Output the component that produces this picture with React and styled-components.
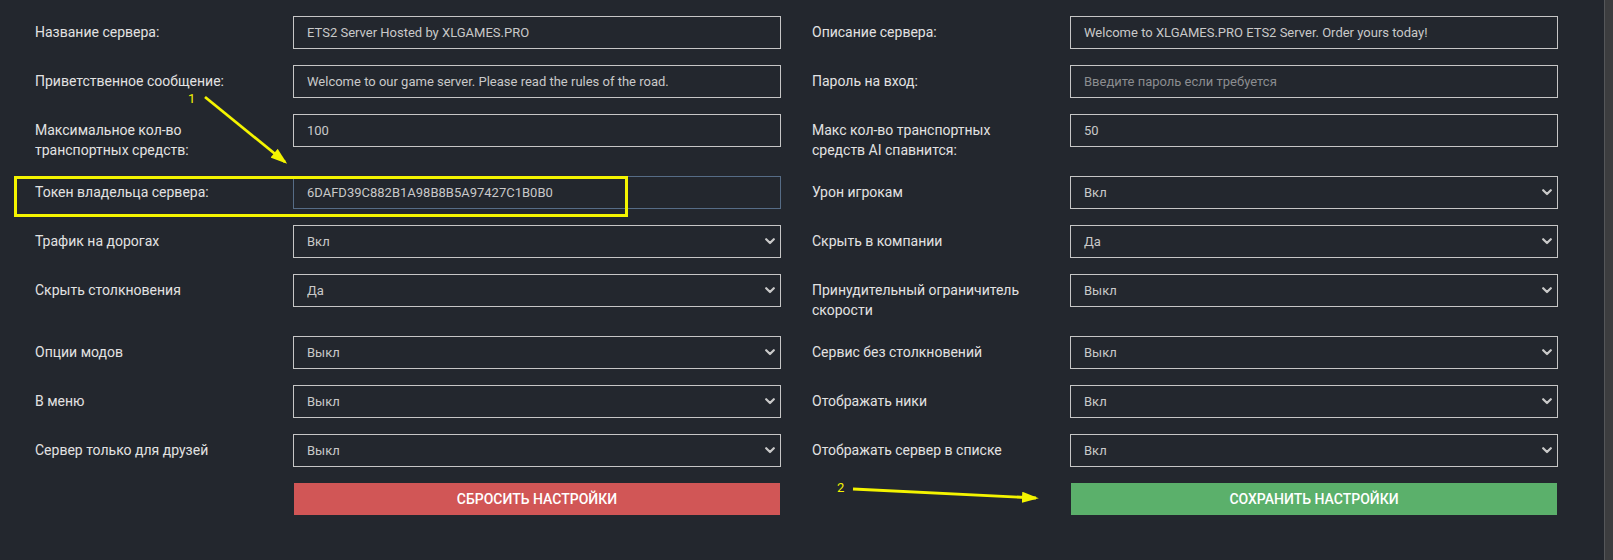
import React from 'react'
import styled, { createGlobalStyle } from 'styled-components'

const GlobalStyle = createGlobalStyle`
  html, body {
    margin: 0;
    padding: 0;
    background: #23272e;
    overflow: hidden;
  }
  body {
    font-family: Roboto, "Noto Sans", Arial, sans-serif;
  }
`

// first row is scrolled out of view, only its bottom border shows
const rows = [
  [
    { id: 'hidden-1', label: '', value: '' },
    { id: 'hidden-2', label: '', value: '' },
  ],
  [
    { label: 'Название сервера:', value: 'ETS2 Server Hosted by XLGAMES.PRO' },
    { label: 'Описание сервера:', value: 'Welcome to XLGAMES.PRO ETS2 Server. Order yours today!' },
  ],
  [
    { label: 'Приветственное сообщение:', value: 'Welcome to our game server. Please read the rules of the road.' },
    { label: 'Пароль на вход:', value: '', placeholder: 'Введите пароль если требуется' },
  ],
  [
    { label: 'Максимальное кол-во транспортных средств:', value: '100' },
    { label: 'Макс кол-во транспортных средств AI спавнится:', value: '50' },
  ],
  [
    { label: 'Токен владельца сервера:', value: '6DAFD39C882B1A98B8B5A97427C1B0B0', focused: true },
    { label: 'Урон игрокам', select: 'Вкл' },
  ],
  [
    { label: 'Трафик на дорогах', select: 'Вкл' },
    { label: 'Скрыть в компании', select: 'Да' },
  ],
  [
    { label: 'Скрыть столкновения', select: 'Да' },
    { label: 'Принудительный ограничитель скорости', select: 'Выкл' },
  ],
  [
    { label: 'Опции модов', select: 'Выкл' },
    { label: 'Сервис без столкновений', select: 'Выкл' },
  ],
  [
    { label: 'В меню', select: 'Выкл' },
    { label: 'Отображать ники', select: 'Вкл' },
  ],
  [
    { label: 'Сервер только для друзей', select: 'Выкл' },
    { label: 'Отображать сервер в списке', select: 'Вкл' },
  ],
]

const Chevron = () => (
  <ChevronIcon width="10" height="7" viewBox="0 0 10 7">
    <path d="M1.2 1.2 L5 5 L8.8 1.2" fill="none" stroke="#c9c9c9" strokeWidth="2.2" strokeLinecap="round" strokeLinejoin="round" />
  </ChevronIcon>
)

const FieldControl = ({ field }) => {
  if (field.select) {
    return (
      <SelectWrap>
        <Select defaultValue={field.select}>
          <option>Вкл</option>
          <option>Выкл</option>
          <option>Да</option>
          <option>Нет</option>
        </Select>
        <Chevron />
      </SelectWrap>
    )
  }
  return (
    <Input
      defaultValue={field.value}
      placeholder={field.placeholder}
      $focused={field.focused}
    />
  )
}

export default function App() {
  return (
    <>
      <GlobalStyle />
      <Page>
        <Content>
          <Form>
            {rows.map((row, i) => (
              <Row key={i}>
                {row.map((field) => (
                  <Field key={field.id || field.label}>
                    <Label>{field.label}</Label>
                    <FieldControl field={field} />
                  </Field>
                ))}
              </Row>
            ))}
            <Row>
              <Field>
                <span />
                <Button $variant="danger">Сбросить настройки</Button>
              </Field>
              <Field>
                <span />
                <Button $variant="success">Сохранить настройки</Button>
              </Field>
            </Row>
          </Form>

          {/* annotations drawn over the screenshot */}
          <Highlight />
          <Annotations width="1604" height="560" viewBox="0 0 1604 560">
            <defs>
              <marker id="head" markerWidth="6" markerHeight="4" refX="5" refY="2" orient="auto" markerUnits="strokeWidth">
                <path d="M0 0 L6 2 L0 4 Z" fill="#f4f400" />
              </marker>
            </defs>
            <text x="188" y="103" fill="#f4f400" fontSize="13" fontFamily="Roboto, Arial, sans-serif">1</text>
            <line x1="205" y1="97" x2="285" y2="162" stroke="#f4f400" strokeWidth="2.8" markerEnd="url(#head)" />
            <text x="837" y="492" fill="#f4f400" fontSize="13" fontFamily="Roboto, Arial, sans-serif">2</text>
            <line x1="853" y1="489" x2="1036" y2="498" stroke="#f4f400" strokeWidth="2.8" markerEnd="url(#head)" />
          </Annotations>
        </Content>
        <Scrollbar />
      </Page>
    </>
  )
}

// Styles
const Page = styled.div`
  display: flex;
  width: 1613px;
  height: 560px;
  overflow: hidden;
  background: #23272e;
`

const Content = styled.div`
  position: relative;
  flex: 1;
  overflow: hidden;
`

const Form = styled.div`
  display: flex;
  flex-direction: column;
  gap: 16px;
  margin-top: -33px;
  padding-left: 35px;
`

const Row = styled.div`
  display: flex;
  gap: 31px;
  align-items: flex-start;
`

const Field = styled.div`
  display: grid;
  grid-template-columns: 258px 488px;
  align-items: start;
`

const Label = styled.div`
  padding-top: 6px;
  padding-right: 40px;
  font-size: 14px;
  line-height: 20px;
  color: #e2e2e2;
`

const Input = styled.input`
  box-sizing: border-box;
  width: 100%;
  height: 33px;
  padding: 0 13px;
  background: transparent;
  border: 1px solid ${p => (p.$focused ? '#566c86' : '#c6c6c6')};
  border-radius: 0;
  outline: none;
  font-family: Roboto, Arial, sans-serif;
  font-size: 13px;
  color: #c9c9c9;

  &::placeholder {
    color: #8b8d90;
  }
`

const SelectWrap = styled.div`
  position: relative;
  width: 100%;
`

const Select = styled.select`
  box-sizing: border-box;
  width: 100%;
  height: 33px;
  padding: 0 13px;
  appearance: none;
  background: transparent;
  border: 1px solid #c6c6c6;
  border-radius: 0;
  outline: none;
  font-family: Roboto, Arial, sans-serif;
  font-size: 13px;
  color: #c9c9c9;

  option {
    background: #23272e;
  }
`

const ChevronIcon = styled.svg`
  position: absolute;
  right: 6px;
  top: 13px;
  pointer-events: none;
`

const Button = styled.button`
  height: 32px;
  width: 486px;
  margin-left: 1px;
  border: none;
  border-radius: 0;
  background: ${p => (p.$variant === 'danger' ? '#d15656' : '#5bb06b')};
  color: #ffffff;
  font-family: Roboto, Arial, sans-serif;
  font-size: 14px;
  font-weight: 500;
  text-transform: uppercase;
  cursor: pointer;
`

const Highlight = styled.div`
  position: absolute;
  left: 14px;
  top: 176px;
  width: 608px;
  height: 35px;
  border: 3px solid #f4f400;
  pointer-events: none;
`

const Annotations = styled.svg`
  position: absolute;
  left: 0;
  top: 0;
  pointer-events: none;
`

const Scrollbar = styled.div`
  width: 8px;
  flex-shrink: 0;
  background: #3c3d3f;
  border-left: 1px solid #55575a;
`
